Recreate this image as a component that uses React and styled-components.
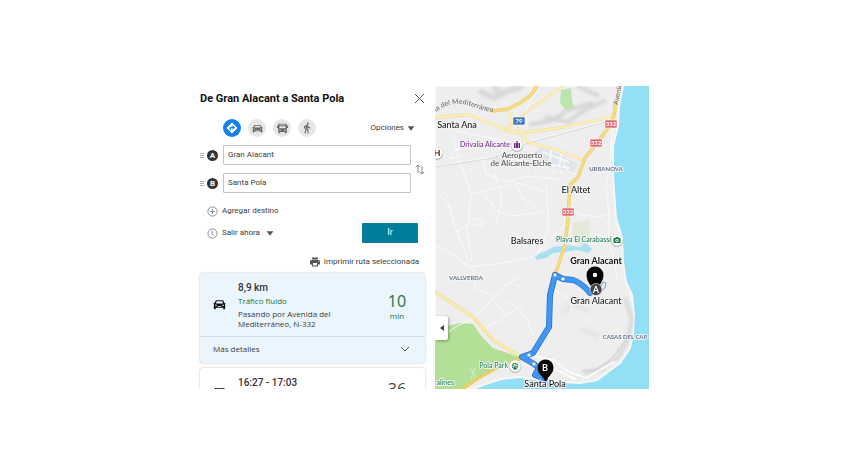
import React from "react";
import styled, { createGlobalStyle, ThemeProvider } from "styled-components";
import { MdDirectionsWalk, MdPrint } from "react-icons/md";

const theme = {
  colors: {
    text: "#3c3c3c",
    dark: "#111",
    border: "#c4c4c4",
    blue: "#1382ea",
    teal: "#007d9a",
    green: "#1c7440",
    selected: "#eaf5fe"
  },
  fonts: {
    ui: `Roboto, "Liberation Sans", sans-serif`,
    card: `"Open Sans", "Noto Sans", sans-serif`,
    map: `Lato, "Open Sans", sans-serif`
  }
};

const GlobalStyle = createGlobalStyle`
  * {
    box-sizing: border-box;
  }
  body {
    margin: 0;
    background: #fff;
  }
  button, input, select {
    font: inherit;
    color: inherit;
  }
  button {
    padding: 0;
    border: 0;
    background: none;
  }
  svg {
    display: block;
    flex: none;
  }
`;

const Page = styled.main`
  height: 100vh;
  padding: 86px 195px;
`;

const Widget = styled.div`
  display: grid;
  grid-template-columns: 240px 1fr;
  height: 100%;
  overflow: hidden;
`;

const Panel = styled.section`
  display: flex;
  flex-direction: column;
  min-height: 0;
  padding: 0 10px 0 5px;
  overflow: hidden;
  font: 8px/12px ${props => props.theme.fonts.ui};
  color: ${props => props.theme.colors.text};

  > * {
    flex: none;
  }
`;

const Header = styled.header`
  display: flex;
  align-items: center;
  justify-content: space-between;
  height: 25px;
`;

const Title = styled.h1`
  margin: 0;
  font-size: 11px;
  line-height: 14px;
  font-weight: 700;
  color: ${props => props.theme.colors.dark};
`;

const Toolbar = styled.div`
  display: flex;
  align-items: center;
  gap: 7px;
  height: 34px;
  padding: 0 10px 0 23px;
`;

const Mode = styled.button`
  display: grid;
  place-items: center;
  width: 18px;
  height: 18px;
  border-radius: 50%;
  color: ${props => (props.$active ? "#fff" : "#666")};
  background: ${props => (props.$active ? props.theme.colors.blue : "#e6e6e6")};
`;

const Options = styled.button`
  display: flex;
  align-items: center;
  gap: 3px;
  margin-left: auto;
`;

const Stops = styled.div`
  display: grid;
  grid-template-columns: 1fr 14px;
  align-items: center;
`;

const StopList = styled.div`
  display: grid;
  gap: 8px;
`;

const Stop = styled.label`
  display: grid;
  grid-template-columns: 7px 16px 1fr;
  align-items: center;
`;

const Badge = styled.span`
  display: grid;
  place-items: center;
  width: 11px;
  height: 11px;
  border-radius: 50%;
  line-height: 11px;
  font-weight: 700;
  color: #fff;
  background: #333;
`;

const StopInput = styled.input`
  width: 100%;
  height: 20px;
  padding: 0 4px 2px;
  border: 1px solid ${props => props.theme.colors.border};
  border-radius: 1px;
  background: #fff;
`;

const Swap = styled.button`
  justify-self: end;
`;

const Actions = styled.div`
  display: grid;
  grid-template-columns: 1fr 56px;
  grid-auto-rows: 22px;
  align-items: center;
  margin-top: 7px;
  padding-right: 7px;
`;

const ActionLine = styled.div`
  grid-column: 1;
  display: flex;
  align-items: center;
  gap: 4px;
  padding-left: 7px;
`;

const AddStop = styled.button`
  display: flex;
  align-items: center;
  gap: 4px;
`;

const Departure = styled.select`
  appearance: none;
  width: 40px;
  padding: 0;
  border: 0;
  background: none;
`;

const Go = styled.button`
  grid-row: 2;
  grid-column: 2;
  height: 20px;
  padding-bottom: 2px;
  border-radius: 1px;
  font-size: 9px;
  color: #fff;
  background: ${props => props.theme.colors.teal};
`;

const Print = styled.button`
  display: flex;
  align-items: center;
  align-self: flex-end;
  gap: 3px;
  height: 16px;
  margin: 10px 6px 3px 0;
`;

const Card = styled.article`
  margin-bottom: 5px;
  border-radius: 3px;
  font-family: ${props => props.theme.fonts.card};
  background: ${props => (props.$selected ? props.theme.colors.selected : "#fff")};
  box-shadow: 0 0 2px rgba(0, 0, 0, 0.3);
`;

const CardBody = styled.div`
  display: grid;
  grid-template-columns: 38px 1fr 56px;
  align-items: center;
  height: ${props => (props.$tall ? 63 : 50)}px;
  color: ${props => props.theme.colors.dark};

  > svg {
    justify-self: center;
  }
`;

const Summary = styled.div`
  align-self: start;
  padding-top: 8px;
  color: ${props => props.theme.colors.text};
`;

const Headline = styled.h2`
  margin: 0;
  font: 500 10px/14px ${props => props.theme.fonts.ui};
  color: #333;
`;

const Traffic = styled.div`
  line-height: 12px;
  color: ${props => props.theme.colors.green};
`;

const Via = styled.p`
  margin: 2px 0 0;
  line-height: 10px;
`;

const Time = styled.div`
  padding-top: 2px;
  line-height: 10px;
  text-align: center;
  color: ${props => (props.$fast ? props.theme.colors.green : "#444")};
`;

const Minutes = styled.div`
  font-size: 16px;
  line-height: 20px;
`;

const Details = styled.button`
  display: flex;
  align-items: center;
  justify-content: space-between;
  width: 100%;
  height: 27px;
  padding: 0 15px 2px 13px;
  border-top: 1px solid #d5dfe7;
`;

const MapArea = styled.section`
  position: relative;
  min-width: 0;
  overflow: hidden;
`;

const MapSvg = styled.svg`
  width: 100%;
  height: 100%;
  font-family: ${props => props.theme.fonts.map};
`;

const Label = styled.text`
  font-size: ${props => props.$size || 9}px;
  font-weight: ${props => props.$weight || 500};
  fill: ${props => props.$color || "#222"};
  stroke: #f4f4f4;
  stroke-width: 2px;
  stroke-linejoin: round;
  paint-order: stroke;
  text-anchor: ${props => props.$anchor || "middle"};
`;

const PinLetter = styled.text`
  font-size: ${props => props.$size || 9}px;
  font-weight: 700;
  fill: #fff;
  text-anchor: middle;
`;

const Collapse = styled.button`
  position: absolute;
  top: 230px;
  left: 0;
  display: grid;
  place-items: center;
  width: 13px;
  height: 24px;
  border-radius: 0 2px 2px 0;
  background: #fff;
  box-shadow: 1px 1px 3px rgba(0, 0, 0, 0.35);
`;

const Caret = () => (
  <svg width="8" height="5" viewBox="0 0 8 5">
    <path d="M.6.3h6.8L4 4.7z" fill="#555" />
  </svg>
);

const RouteIcon = () => (
  <svg width="12" height="12" viewBox="0 0 12 12">
    <path d="M6 1 11 6 6 11 1 6z" fill="#fff" stroke="#fff" strokeLinejoin="round" />
    <path d="M4.200 8.500V6.800q0-1.300 1.300-1.300h2" fill="none" stroke="#1382ea" strokeWidth="1.300" />
    <path d="M6.600 3.200 9.200 5.500 6.600 7.800z" fill="#1382ea" />
  </svg>
);

const CarIcon = ({ size }) => (
  <svg width={size} height={size} viewBox="0 0 14 14" fill="currentColor">
    <path
      fillRule="evenodd"
      d="M3.7 2.5h6.6c.6 0 .9.3 1.1.8l.7 2 1.1-.3c.5 0 .6.7.1.9l-.7.3c.4.3.5.7.5 1.1v3.9c0 .6-.3.9-.8.9h-.5c-.5 0-.8-.3-.8-.9v-.7H3v.7c0 .6-.3.9-.8.9h-.5c-.5 0-.8-.3-.8-.9V7.300c0-.4.1-.8.5-1.1l-.7-.3C.2 5.700.3 5 .8 5l1.1.3.7-2c.2-.5.5-.8 1.100-.8zM3.900 3.600 3.200 5.800h7.600l-.7-2.200zM2.200 7.200v1.200h2.100l-.5-1.200zm9.600 0h-1.600l-.5 1.200h2.100zM5 8.900v.8h4v-.8z"
    />
  </svg>
);

const BusIcon = ({ size }) => (
  <svg width={size} height={size} viewBox="0 0 14 14" fill="currentColor">
    <path
      fillRule="evenodd"
      d="M2.500 1h9c.7 0 1 .4 1 1v1.500H14v3h-1.500V11c0 .3-.2.600-.5.600v1.400h-2v-1.400H4V13H2v-1.400c-.3 0-.5-.3-.5-.6V6.500H0v-3h1.500V2c0-.6.3-1 1-1zM3 2v1h8V2zm0 2.200v2.600h8V4.200zM3 8.600V10h1.800V8.600zm6.200 0V10H11V8.600z"
    />
  </svg>
);

const minorRoads = [
  "M0 80 58 71 90 57 178 33",
  "M0 62 16 73 28 68M14 73 20 64 28 62",
  "M18 53 24 72 36 108 33 139 22 145M36 108 52 104 84 97 111 106",
  "M47 72 51 88 72 96 92 90 127 94",
  "M0 159 15 166 34 181 62 178 88 173 102 169 120 148 134 136",
  "M38 180 41 203 54 208 70 228M31 177 37 174 31 139 40 132 48 135 47 140 38 138",
  "M39 231 53 218 70 199 87 190M13 246 24 239 38 233",
  "M134 118 144 128 165 131 174 128 174 157 180 176 182 194",
  "M178 40 175 76 171 101 174 128",
  "M0 105 13 117 22 145 33 174M49 108 62 125 80 130 106 126",
  "M60 88 67 111 62 137M80 96 87 112 102 120M112 99 113 144 103 168",
  "M89 217 66 234 53 240M121 205 137 214 136 225",
  "M102 0 91 25 92 40M0 38 30 47 76 56",
  "M72 214 91 231 98 249M126 70 132 84 145 90"
];

const fieldLines = [
  "M50 112 58 140M54 111 63 139M64 108 72 131M73 106 81 130M85 103 93 124M51 121 101 110M57 133 108 119",
  "M7 108 17 102 28 108M3 126 20 119 31 126M8 143 24 131M10 91 39 82M19 84 29 99",
  "M47 147 60 160 72 153M54 152 71 143 85 150M75 151 86 165M63 162 92 151",
  "M52 197 67 187 81 191M62 211 80 198 93 204M68 224 90 212 104 218",
  "M100 77 101 96M108 77 107 101M118 79 116 107M95 83 128 86M11 199 28 191M17 211 33 202"
];

const yellowRoads = [
  "M0 32 15 30 35 29 52 36 73 45 87 47 130 41 177 31",
  "M128 0 98 21 70 44",
  "M85 17 73 23 77 34 72 46",
  "M83 42 92 56 122 64 148 74",
  "M58 25 73 23 85 17 96 9 102 0",
  "M180 18 180 24 177 37 162 57 150 72 143 91 135 99 134 116 133 132 130 159 120 189",
  "M0 206 38 231 58 254 88 272"
];

const Terrain = () => (
  <g>
    <defs>
      <filter id="relief" x="-20%" y="-20%" width="140%" height="140%">
        <feGaussianBlur stdDeviation="1.500" />
      </filter>
      <path id="mediterraneo" d="M1 26C10 19 20 16 32 19S48 26 64 26" />
      <path id="avenida" d="M183 19 189 -12" />
    </defs>
    <rect width="214" height="303" fill="#93dff6" />
    <path
      d="M0 0H188L184 20 183 40 178 60 178 90 179 104 181 132 187 152 188 176 191 196 197 209 199 229 198 248 195 262 185 277 162 294 145 297 128 296 105 294 85 291 66 293 48 299 38 303H0z"
      fill="#eeeeee"
      stroke="#f7f7f5"
      strokeWidth="2"
    />
    <g filter="url(#relief)" fill="none" stroke="#cfd0d2">
      <path d="M44 5 59 12 73 5 88 0M58 0 68 10" strokeWidth="6" opacity=".7" />
      <path d="M94 39 118 34 133 24 158 17M110 31 133 36 148 25 171 14M142 0 164 10" strokeWidth="4" opacity=".8" />
      <path d="M190 212 197 233 193 253 184 270 165 284 149 287" strokeWidth="4" opacity=".7" />
      <path d="M126 228 139 218 153 226M147 242 163 251" strokeWidth="4" opacity=".35" />
    </g>
    <path d="M184 264 174 275 160 284 147 285M191 254 182 265" fill="none" stroke="#c9cbcd" />
    <path d="M126 4 136 2 137 14 139 21 131 24 125 17z" fill="#bce5ad" />
    <path d="M138 137 155 134 155 154 145 160 137 153z" fill="#dbe9cd" opacity=".6" />
    <path d="M0 246 13 240 25 237 38 238 47 251 58 262 87 272 62 282 42 293 28 303H0z" fill="#b2e097" />
    <path d="M34 281 41 290 37 296M40 282 36 293" fill="none" stroke="#d7efc8" />
    <path d="M100 169 111 165 118 161 132 159 145 161 151 157 157 163 153 167 143 164 128 166 118 167 111 172 101 174z" fill="#a8e0f1" />
    <path d="M99 70 105 61 118 65 143 78 139 86 102 78 57 76 61 70z" fill="#dfe5ea" />
    <path d="M64 71 135 82M108 66 134 76M116 64 115 77M127 68 124 80" fill="none" stroke="#f5f7f8" strokeWidth="2" />
  </g>
);

const Roads = () => (
  <g fill="none" strokeLinejoin="round" strokeLinecap="round">
    {fieldLines.map(d => (
      <path key={d} d={d} stroke="#f5f5f5" strokeWidth=".6" />
    ))}
    {minorRoads.map(d => (
      <path key={d} d={d} stroke="#fafafa" strokeWidth="1" />
    ))}
    <path d="M0 81 58 72 90 58 178 34" stroke="#bfc0c2" strokeWidth=".5" />
    <path d="M180 22 185 0" stroke="#f3ecc8" strokeWidth="2" />
    <path d="M99 270 119 274 132 285 151 292 179 276M105 278 124 285 140 293M116 276 113 291" stroke="#fff" strokeWidth="1.500" />
    {yellowRoads.map((d, i) => (
      <g key={d}>
        <path d={d} stroke={i > 3 ? "#efce69" : "#f0dc97"} strokeWidth={i === 4 || i === 5 ? 3.500 : 2.800} />
        <path d={d} stroke={i === 4 || i === 5 ? "#f8df8b" : "#fff2bd"} strokeWidth="1.600" />
      </g>
    ))}
    <path d="M88 272 62 282 42 293 28 303" stroke="#f2cd5c" strokeWidth="3" />
    <path d="M165 202 168 196 171 197 170 202 165 206" stroke="#7f9bdd" />
  </g>
);

const Route = () => (
  <g fill="none" strokeLinejoin="round" strokeLinecap="round">
    {[["#246cc8", 6], ["#4097f5", 4.500]].map(([stroke, width]) => (
      <g key={stroke} stroke={stroke} strokeWidth={width}>
        <path d="M120 189 115 209 114 241 98 267 87 271 99 278 104 282 100 289 110 293" />
        <path d="M120 189 128 193 138 194Q147 197 155 207" />
      </g>
    ))}
    {[[120, 189], [128, 193], [94, 269], [99, 278]].map(([x, y]) => (
      <circle key={x} cx={x} cy={y} r="1.800" fill="#fff" stroke="#68a9ef" strokeWidth=".5" />
    ))}
  </g>
);

const Shield = ({ x, y, color, children }) => (
  <g>
    <rect x={x - 6} y={y - 4} width="12" height="8" rx="1" fill={color} stroke="#fff" strokeWidth=".6" />
    <PinLetter x={x} y={y + 2} $size={6}>
      {children}
    </PinLetter>
  </g>
);

const Poi = ({ x, y, color, children }) => (
  <g transform={`translate(${x} ${y})`}>
    <circle cy=".6" r="6.300" fill="#888" opacity=".5" />
    <circle r="5.700" fill="#fff" />
    <g fill={color}>{children}</g>
  </g>
);

const Places = () => (
  <g>
    <text fontSize="7" fill="#666">
      <textPath href="#mediterraneo">ía del Mediterráneo</textPath>
    </text>
    <text fontSize="7" fill="#666">
      <textPath href="#avenida">Avenida</textPath>
    </text>
    <Label x="22" y="42">Santa Ana</Label>
    <Label x="87" y="72" $size={8} $color="#555">Aeropuerto</Label>
    <Label x="86" y="80" $size={8} $color="#555">de Alicante-Elche</Label>
    <Label x="141" y="107">El Altet</Label>
    <Label x="92" y="158">Balsares</Label>
    <Label x="171" y="85" $size={6} $weight={700} $color="#6a7593">URBANOVA</Label>
    <Label x="31" y="194" $size={6} $weight={700} $color="#6a7593">VALLVERDA</Label>
    <Label x="190" y="253" $size={6} $weight={700} $color="#6a7593">CASAS DEL CAP</Label>
    <Label x="75" y="61" $size={7} $color="#7c2e91" $anchor="end">Drivalia Alicante</Label>
    <Label x="176" y="156" $size={7} $color="#218557" $anchor="end">Playa El Carabassí</Label>
    <Label x="73" y="282" $size={7} $color="#218557" $anchor="end">Pola Park</Label>
    <Label x="19" y="299" $size={7} $color="#218557" $anchor="end">alines</Label>
    <Shield x={84} y={35} color="#4078bd">79</Shield>
    <Shield x={176} y={38} color="#dc6970">332</Shield>
    <Shield x={161} y={57} color="#dc6970">332</Shield>
    <Shield x={133} y={126} color="#dc6970">332</Shield>
    <Poi x={82} y={59} color="#71217f">
      <path d="M-3-2h1v5h-1zM-1.500-2h3v5h-3zM2-2h1v5H2zM-1.200-3.700h2.400V-2H.6v-.9H-.6v.9h-.6z" />
    </Poi>
    <Poi x={182} y={154} color="#167b4a">
      <path fillRule="evenodd" d="M-3.500-2h1.800l.6-1h2.200l.6 1h1.800v5h-7zM0-1.300a1.700 1.700 0 1 0 0 3.400 1.700 1.700 0 0 0 0-3.400z" />
      <circle cy=".4" r=".8" />
    </Poi>
    <Poi x={80} y={280} color="#167b4a">
      <circle r="2.500" fill="none" stroke="#167b4a" strokeWidth="1.500" strokeDasharray="1.400 .5" />
      <path d="M0 0 2 3.500h-4z" />
      <circle r=".8" />
    </Poi>
    <Poi x={2} y={67} color="#96472d">
      <path d="M-3-3h1.600v2.200h2.800V-3H3v6H1.400V.6h-2.800V3H-3z" />
    </Poi>
  </g>
);

const Pins = () => (
  <g>
    <path d="M160 207C157 200 151.500 196 151.500 189a8.500 8.500 0 0 1 17 0C168.500 196 163 200 160 207z" fill="#060606" />
    <circle cx="160" cy="189" r="2.200" fill="#fff" />
    <circle cx="161" cy="203.500" r="6" fill="#444" stroke="#eee" strokeWidth=".6" />
    <PinLetter x="161" y="207">A</PinLetter>
    <path d="M110.500 296C108 290 102.500 288 102.500 281.500a8 8 0 0 1 16 0C118.500 288 113 290 110.500 296z" fill="#060606" />
    <PinLetter x="110" y="285">B</PinLetter>
    <Label x="161" y="178" $weight={700} $color="#111">Gran Alacant</Label>
    <Label x="161" y="218">Gran Alacant</Label>
    <Label x="110" y="301">Santa Pola</Label>
  </g>
);

const stops = [
  { letter: "A", name: "Gran Alacant" },
  { letter: "B", name: "Santa Pola" }
];

const Directions = () => {
  return (
    <Panel>
      <Header>
        <Title>De Gran Alacant a Santa Pola</Title>
        <button aria-label="Cerrar">
          <svg width="11" height="11" viewBox="0 0 11 11" stroke="#555">
            <path d="m1 1 9 9m0-9-9 9" />
          </svg>
        </button>
      </Header>

      <Toolbar>
        <Mode $active aria-label="Recomendado">
          <RouteIcon />
        </Mode>
        <Mode aria-label="Coche">
          <CarIcon size={11} />
        </Mode>
        <Mode aria-label="Transporte público">
          <BusIcon size={11} />
        </Mode>
        <Mode aria-label="A pie">
          <MdDirectionsWalk size={12} />
        </Mode>
        <Options aria-expanded="false">
          Opciones <Caret />
        </Options>
      </Toolbar>

      <Stops>
        <StopList>
          {stops.map(stop => (
            <Stop key={stop.letter}>
              <svg width="5" height="7" viewBox="0 0 5 7" stroke="#999">
                <path d="M0 1.500h4m-4 2h4m-4 2h4" strokeWidth=".8" />
              </svg>
              <Badge>{stop.letter}</Badge>
              <StopInput type="text" defaultValue={stop.name} />
            </Stop>
          ))}
        </StopList>
        <Swap aria-label="Invertir ruta">
          <svg width="10" height="11" viewBox="0 0 10 11" fill="none" stroke="#777" strokeWidth=".9">
            <path d="M3 9V1M.8 3.200 3 1l2.200 2.200M7 2v8M4.800 7.800 7 10l2.200-2.200" />
          </svg>
        </Swap>
      </Stops>

      <Actions>
        <ActionLine>
          <AddStop>
            <svg width="11" height="11" viewBox="0 0 11 11" fill="none" stroke="#777" strokeWidth=".8">
              <circle cx="5.500" cy="5.500" r="4.600" />
              <path d="M5.500 3v5M3 5.500h5" />
            </svg>
            Agregar destino
          </AddStop>
        </ActionLine>
        <ActionLine>
          <svg width="11" height="11" viewBox="0 0 11 11" fill="none" stroke="#777" strokeWidth=".8">
            <circle cx="5.500" cy="5.500" r="4.600" />
            <path d="M5 2.500v3.500l2 1.500" />
          </svg>
          <Departure aria-label="Hora de salida">
            <option>Salir ahora</option>
          </Departure>
          <Caret />
        </ActionLine>
        <Go>Ir</Go>
      </Actions>

      <Print>
        <MdPrint size={12} color="#555" />
        Imprimir ruta seleccionada
      </Print>

      <Card $selected>
        <CardBody $tall>
          <CarIcon size={13} />
          <Summary>
            <Headline>8,9 km</Headline>
            <Traffic>Tráfico fluido</Traffic>
            <Via>Pasando por Avenida del Mediterráneo, N-332</Via>
          </Summary>
          <Time $fast>
            <Minutes>10</Minutes>
            min
          </Time>
        </CardBody>
        <Details>
          Más detalles
          <svg width="10" height="6" viewBox="0 0 10 6" fill="none" stroke="#555">
            <path d="m1 1 4 4 4-4" />
          </svg>
        </Details>
      </Card>

      <Card>
        <CardBody>
          <BusIcon size={13} />
          <Summary>
            <Headline>16:27 - 17:03</Headline>
          </Summary>
          <Time>
            <Minutes>36</Minutes>
            min
          </Time>
        </CardBody>
      </Card>
    </Panel>
  );
};

const App = () => {
  return (
    <ThemeProvider theme={theme}>
      <GlobalStyle />
      <Page>
        <Widget>
          <Directions />
          <MapArea>
            <MapSvg viewBox="0 0 214 303" preserveAspectRatio="xMidYMid slice">
              <Terrain />
              <Roads />
              <Route />
              <Places />
              <Pins />
            </MapSvg>
            <Collapse aria-label="Contraer panel">
              <svg width="4" height="6" viewBox="0 0 4 6">
                <path d="M4 0v6L0 3z" fill="#444" />
              </svg>
            </Collapse>
          </MapArea>
        </Widget>
      </Page>
    </ThemeProvider>
  );
};
export default App;
